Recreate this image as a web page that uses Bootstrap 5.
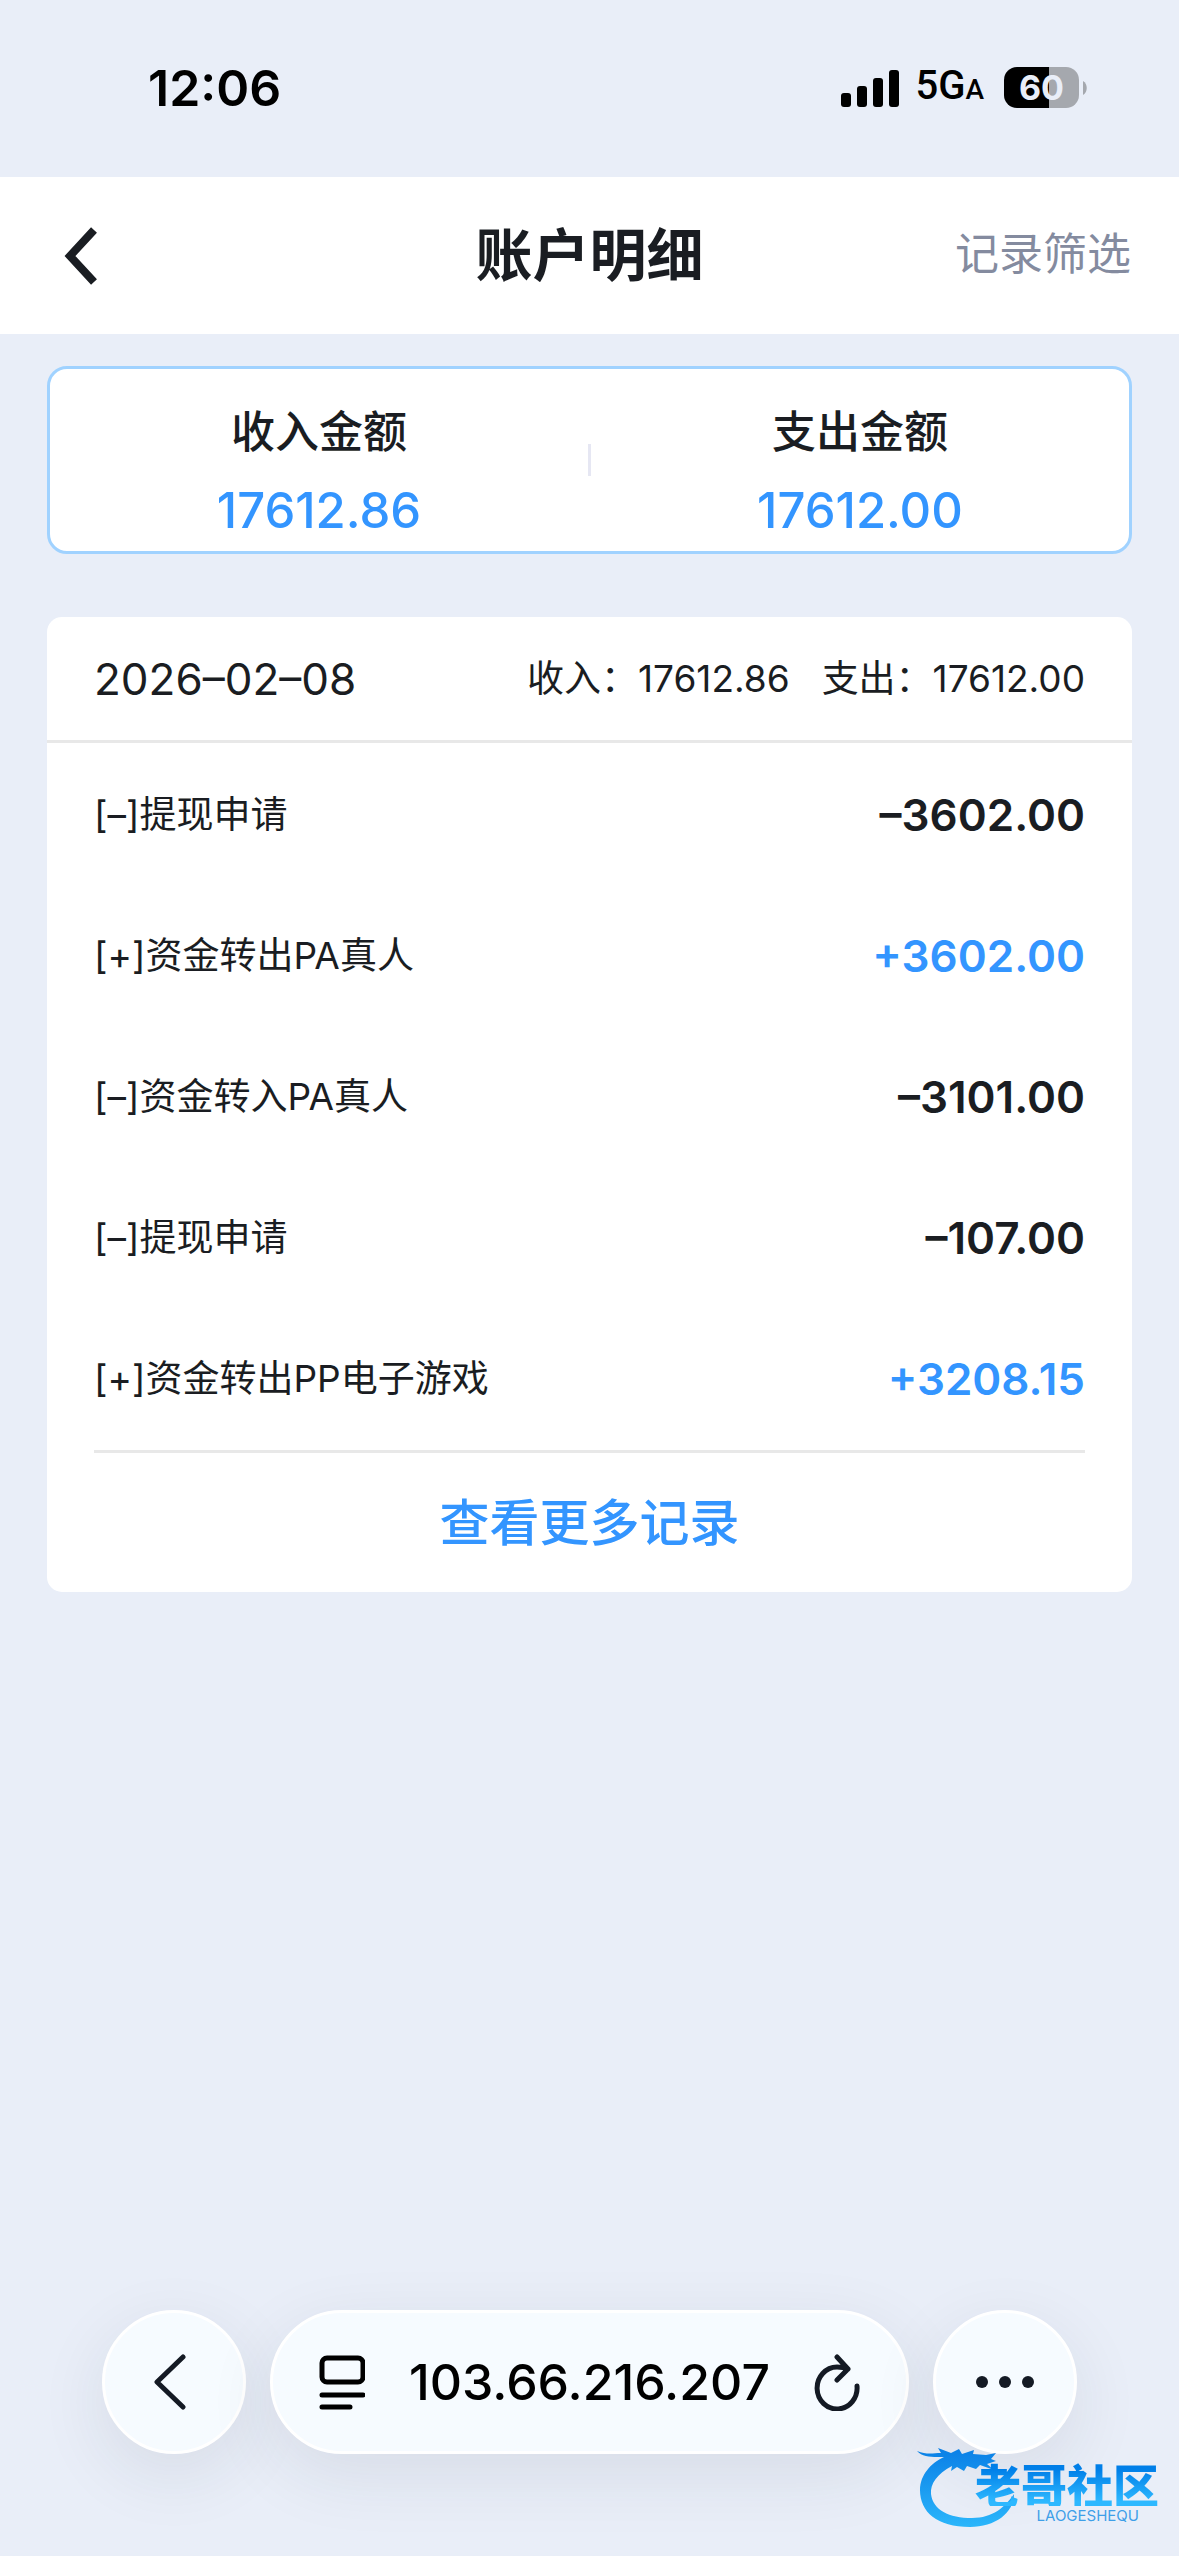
<!DOCTYPE html>
<html lang="zh-CN">
<head>
<meta charset="utf-8">
<meta name="viewport" content="width=device-width, initial-scale=1">
<title>账户明细</title>
<link href="https://cdn.jsdelivr.net/npm/bootstrap@5.3.0/dist/css/bootstrap.min.css" rel="stylesheet">
<style>
  body { background: #e9eef8; color: #1a1d22; font-family: Inter, "Noto Sans CJK SC", sans-serif; font-size: 37px; line-height: 56px; }
  .status-bar { height: 177px; padding: 0 92px 2px 148px; color: #000; }
  .clock { font-size: 50px; font-weight: 600; }
  .net-type { font-family: Roboto, sans-serif; font-size: 40px; font-weight: 500; }
  .net-type span { font-size: 28px; }
  .battery-body { width: 75px; height: 41px; border-radius: 13px; background: linear-gradient(90deg, #000 60%, #a5a8ae 60%); color: #e9eef8; font-size: 34px; font-weight: 700; line-height: 41px; }
  .title-bar { min-height: 157px; padding: 0 48px; }
  .title-bar > * { flex: 1 1 0; }
  .title-bar h1 { font-size: 57px; font-weight: 700; line-height: 80px; }
  .plain-btn { border: 0; background: none; padding: 0; color: inherit; }
  .filter-btn { color: #848b9f; font-size: 44px; }
  .page-main { padding: 32px 47px; }
  .summary { border: 3px solid #a0d2ff; border-radius: 20px; height: 188px; }
  .summary-cell { padding-top: 22px; }
  .summary dt { font-size: 44px; font-weight: 500; line-height: 64px; }
  .summary dd { font-size: 49px; font-weight: 500; line-height: 64px; margin-top: 15px; }
  .divider { width: 3px; height: 32px; background: #e6e7f3; }
  .blue { color: #3395ff; }
  .day-card { margin-top: 63px; border-radius: 15px; }
  .day-head { height: 126px; padding: 0 47px; border-bottom: 3px solid #e8e8e8; }
  .day-sums { gap: 32px; }
  .day-date, .amount { font-size: 44px; }
  .amount { font-weight: 600; }
  .records { padding: 1px 47px; }
  .record { height: 141px; }
  .more-wrap { margin: 0 47px; border-top: 3px solid #e8e8e8; }
  .more-btn { height: 139px; font-size: 50px; font-weight: 500; color: #3395ff; }
  .browser-bar { padding: 0 102px 102px; gap: 24px; }
  .glass { height: 144px; border: 3px solid #fff; border-radius: 72px; background: #f6fbff; box-shadow: 0 20px 70px rgba(30, 40, 60, .09); color: #141a24; }
  .round-btn { width: 144px; padding: 0; }
  .address { padding: 0 44px; color: #000; font-size: 50px; font-weight: 500; }
  .watermark { position: absolute; right: 16px; bottom: 28px; width: 246px; height: 82px; }
  .watermark svg { position: absolute; left: 0; top: 0; }
  .wm-text { position: absolute; right: 4px; top: 14px; text-align: right; }
  .wm-name { font-family: "Noto Sans CJK SC", sans-serif; font-size: 46px; font-weight: 900; line-height: 46px; background: linear-gradient(#007fe8 20%, #2db8ff 90%); -webkit-background-clip: text; background-clip: text; color: transparent; }
  .wm-latin { font-size: 15px; line-height: 20px; color: #3f9fe8; padding-right: 20px; }
</style>
<script src="https://cdn.jsdelivr.net/npm/bootstrap@5.3.0/dist/js/bootstrap.bundle.min.js"></script>
</head>
<body>
<div class="d-flex flex-column min-vh-100 position-relative">
  <div class="status-bar d-flex align-items-center justify-content-between">
    <span class="clock">12:06</span>
    <div class="d-flex align-items-center">
      <svg width="58" height="38" viewBox="0 0 58 38" aria-hidden="true">
        <rect x="0" y="24" width="10" height="14" rx="3"/><rect x="16" y="17" width="10" height="21" rx="3"/><rect x="32" y="9" width="10" height="29" rx="3"/><rect x="48" y="1" width="10" height="37" rx="3"/>
      </svg>
      <span class="net-type px-3 me-1">5G<span>A</span></span>
      <span class="battery-body text-center">60</span>
      <svg class="ms-1" width="4" height="14" viewBox="0 0 4 14" aria-hidden="true"><path d="M0 0C5 3 5 11 0 14Z" fill="#a5a8ae"/></svg>
    </div>
  </div>

  <header class="title-bar bg-white d-flex align-items-center">
    <div class="d-flex">
      <button class="plain-btn d-flex ps-3" type="button" aria-label="返回">
        <svg width="34" height="58" viewBox="0 0 34 58" fill="none" stroke="#1a1d22" stroke-width="8"><path d="M30 3L6 29L30 55"/></svg>
      </button>
    </div>
    <h1 class="m-0 text-center text-nowrap">账户明细</h1>
    <div class="text-end"><button class="plain-btn filter-btn" type="button">记录筛选</button></div>
  </header>

  <main class="page-main">
    <dl class="summary bg-white d-flex align-items-center m-0 text-center">
      <div class="summary-cell flex-fill w-50"><dt>收入金额</dt><dd class="blue mb-0">17612.86</dd></div>
      <div class="divider flex-shrink-0"></div>
      <div class="summary-cell flex-fill w-50"><dt>支出金额</dt><dd class="blue mb-0">17612.00</dd></div>
    </dl>

    <section class="day-card bg-white">
      <div class="day-head d-flex align-items-center justify-content-between">
        <span class="day-date">2026–02–08</span>
        <div class="day-sums d-flex"><span>收入：17612.86</span><span>支出：17612.00</span></div>
      </div>
      <ul class="records list-unstyled m-0">
        <li class="record d-flex align-items-center justify-content-between"><span>[–]提现申请</span><span class="amount">–3602.00</span></li>
        <li class="record d-flex align-items-center justify-content-between"><span>[+]资金转出PA真人</span><span class="amount blue">+3602.00</span></li>
        <li class="record d-flex align-items-center justify-content-between"><span>[–]资金转入PA真人</span><span class="amount">–3101.00</span></li>
        <li class="record d-flex align-items-center justify-content-between"><span>[–]提现申请</span><span class="amount">–107.00</span></li>
        <li class="record d-flex align-items-center justify-content-between"><span>[+]资金转出PP电子游戏</span><span class="amount blue">+3208.15</span></li>
      </ul>
      <div class="more-wrap"><button class="plain-btn more-btn w-100" type="button">查看更多记录</button></div>
    </section>
  </main>

  <nav class="browser-bar d-flex mt-auto" aria-label="浏览器">
    <button class="glass round-btn d-flex align-items-center justify-content-center flex-shrink-0" type="button" aria-label="后退">
      <svg class="me-2" width="34" height="56" viewBox="0 0 34 56" fill="none" stroke="currentColor" stroke-width="5" stroke-linecap="round" stroke-linejoin="round"><path d="M30 3L4 28L30 53"/></svg>
    </button>
    <div class="glass address flex-fill d-flex align-items-center justify-content-between">
      <button class="plain-btn d-flex" type="button" aria-label="页面菜单">
        <svg width="48" height="56" viewBox="0 0 48 56" fill="none" stroke="#000" stroke-width="5" stroke-linecap="round"><rect x="5" y="4" width="41" height="24" rx="5"/><path d="M5 41H46M5 53H33"/></svg>
      </button>
      <span>103.66.216.207</span>
      <button class="plain-btn d-flex" type="button" aria-label="刷新">
        <svg width="48" height="58" viewBox="0 0 48 58" fill="none" stroke="#141a24" stroke-width="5" stroke-linecap="round" stroke-linejoin="round"><path d="M43 33A20 21 0 1 1 23 14Q29 14 34 16M23 4L34 16L23 27"/></svg>
      </button>
    </div>
    <button class="glass round-btn d-flex align-items-center justify-content-center flex-shrink-0" type="button" aria-label="更多">
      <svg width="60" height="12" viewBox="0 0 60 12" fill="currentColor"><circle cx="7" cy="6" r="6"/><circle cx="30" cy="6" r="6"/><circle cx="53" cy="6" r="6"/></svg>
    </button>
  </nav>

  <div class="watermark">
    <svg width="100" height="82" viewBox="0 0 100 82" aria-hidden="true">
      <defs><linearGradient id="wave" x1="0" y1="0" x2="0" y2="1"><stop offset="0" stop-color="#0a7fe6"/><stop offset="1" stop-color="#2bb6fb"/></linearGradient></defs>
      <path fill="url(#wave)" d="M0 5C10 9 16 7 24 7L21 2L34 7L42 3L45 8L57 4L56 8L69 9L79 7L74 13L79 15L70 18L77 24L63 19L59 23L50 20L47 25L40 21L34 25L35 20C20 28 13 38 14 48C16 64 32 72 55 72C76 72 88 61 97 48C97 67 78 81 53 81C20 81 3 66 3 44C3 29 14 17 27 11C17 11 6 12 0 5Z"/>
    </svg>
    <div class="wm-text"><div class="wm-name">老哥社区</div><div class="wm-latin">LAOGESHEQU</div></div>
  </div>
</div>
</body>
</html>
